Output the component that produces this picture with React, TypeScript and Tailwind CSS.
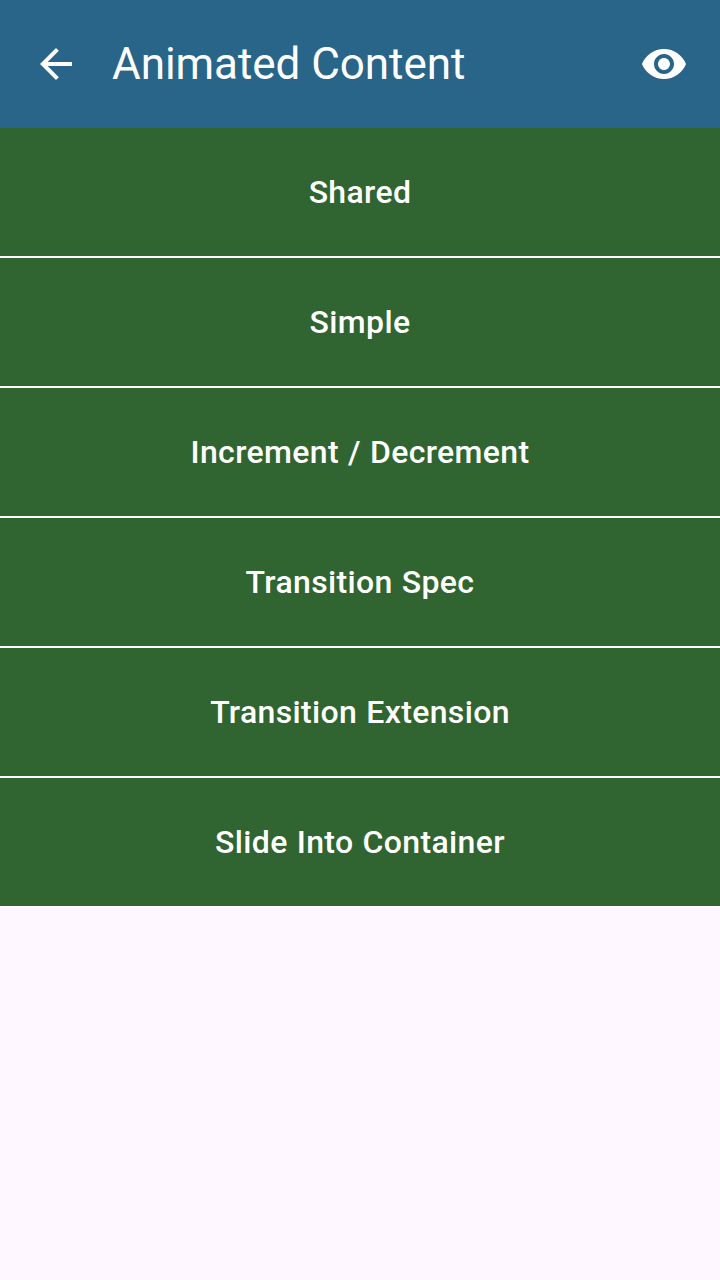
import React from 'react';

const items: string[] = [
  'Shared',
  'Simple',
  'Increment / Decrement',
  'Transition Spec',
  'Transition Extension',
  'Slide Into Container',
];

function BackIcon() {
  return (
    <svg viewBox="0 0 24 24" className="size-12 fill-white" aria-hidden="true">
      <path d="M20 11H7.83l5.59-5.59L12 4l-8 8 8 8 1.41-1.41L7.83 13H20v-2z" />
    </svg>
  );
}

function EyeIcon() {
  return (
    <svg viewBox="0 0 24 24" className="size-12 fill-white" aria-hidden="true">
      <path d="M12 4.5C7 4.5 2.73 7.61 1 12c1.73 4.39 6 7.5 11 7.5s9.27-3.11 11-7.5c-1.73-4.39-6-7.5-11-7.5zM12 17c-2.76 0-5-2.24-5-5s2.24-5 5-5 5 2.24 5 5-2.24 5-5 5zm0-8c-1.66 0-3 1.34-3 3s1.34 3 3 3 3-1.34 3-3-1.34-3-3-3z" />
    </svg>
  );
}

export default function App() {
  return (
    <div className="flex min-h-screen flex-col bg-[#fef7ff] font-['Roboto',sans-serif] text-white">
      <header className="flex h-32 items-center bg-[#296588] px-8">
        <button aria-label="Back">
          <BackIcon />
        </button>
        <h1 className="ml-8 flex-1 text-[44px] leading-[56px] tracking-[-0.05px]">Animated Content</h1>
        <button aria-label="Preview">
          <EyeIcon />
        </button>
      </header>
      <ul className="flex flex-col gap-0.5">
        {items.map((item) => (
          <li
            key={item}
            className="flex h-32 items-center justify-center bg-[#306430] text-[32px] leading-[48px] font-medium tracking-[0.35px] [word-spacing:0.8px]"
          >
            {item}
          </li>
        ))}
      </ul>
    </div>
  );
}
